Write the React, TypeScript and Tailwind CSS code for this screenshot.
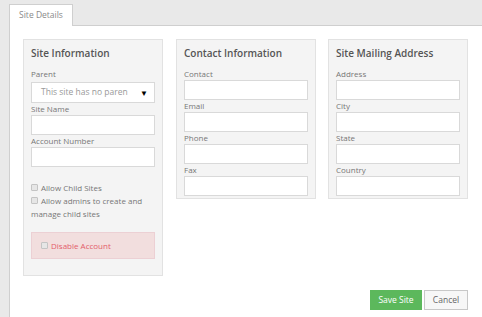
const font = { fontFamily: '"Open Sans", "Liberation Sans", sans-serif' };

function Field({ label }: { label: string }) {
  return (
    <div>
      <div className="text-[8px] leading-[12px] text-[#777]">{label}</div>
      <div className="h-[20px] bg-white border border-[#d9d9d9]" />
    </div>
  );
}

function Panel({ title, children }: { title: string; children: React.ReactNode }) {
  return (
    <div className="w-[140px] bg-[#f4f4f4] border border-[#e2e2e2] px-[7px] pt-[6px] pb-[2px] self-start">
      <div className="text-[10px] leading-[14px] font-semibold text-[#555] mb-[8px]">{title}</div>
      {children}
    </div>
  );
}

function Check() {
  return (
    <span className="inline-block w-[7px] h-[7px] mr-[3px] rounded-[1px] border border-[#c4c4c4] bg-[#e6e6e6]" />
  );
}

export default function App() {
  return (
    <div className="w-[482px] h-[317px] bg-[#e9e9e9] flex flex-col pt-[4px] pl-[9px] overflow-hidden" style={font}>
      {/* Tabs */}
      <div className="flex h-[22px] shrink-0">
        <div className="w-[64px] bg-white border border-b-0 border-[#cfcfcf] text-[8.5px] text-[#8a8a8a] flex items-center justify-center">
          Site Details
        </div>
        <div className="flex-1 border-b border-[#cfcfcf]" />
      </div>

      {/* Content */}
      <div className="flex-1 bg-white border-l border-[#cfcfcf] pl-[13px] pt-[13px] pr-[14px]">
        <div className="flex gap-[13px]">
          <Panel title="Site Information">
            <div className="text-[8px] leading-[12px] text-[#777]">Parent</div>
            <div className="mt-[2px] h-[21px] bg-white border border-[#d9d9d9] flex items-center justify-between pl-[9px] pr-[6px]">
              <span className="text-[8.5px] text-[#999] whitespace-nowrap">This site has no paren</span>
              <span className="text-[8px] text-black">▼</span>
            </div>
            <Field label="Site Name" />
            <Field label="Account Number" />
            <div className="mt-[14px] text-[8px] leading-[13px] text-[#777]">
              <div>
                <Check />
                Allow Child Sites
              </div>
              <div>
                <Check />
                Allow admins to create and manage child sites
              </div>
            </div>
            <div className="mt-[12px] mb-[14px] h-[27px] bg-[#f2dede] border border-[#ecd0d4] flex items-center pl-[9px] text-[8px] text-[#e35d6a]">
              <Check />
              Disable Account
            </div>
          </Panel>
          <div className="flex gap-[12px] self-start">
            <Panel title="Contact Information">
              <Field label="Contact" />
              <Field label="Email" />
              <Field label="Phone" />
              <Field label="Fax" />
            </Panel>
            <Panel title="Site Mailing Address">
              <Field label="Address" />
              <Field label="City" />
              <Field label="State" />
              <Field label="Country" />
            </Panel>
          </div>
        </div>

        <div className="flex justify-end gap-[2px] mt-[14px]">
          <button className="w-[52px] h-[20px] bg-[#5cb85c] text-white text-[8.5px]">Save Site</button>
          <button className="w-[44px] h-[20px] bg-[#f7f7f7] border border-[#c8c8c8] text-[#666] text-[8.5px]">Cancel</button>
        </div>
      </div>
    </div>
  );
}
